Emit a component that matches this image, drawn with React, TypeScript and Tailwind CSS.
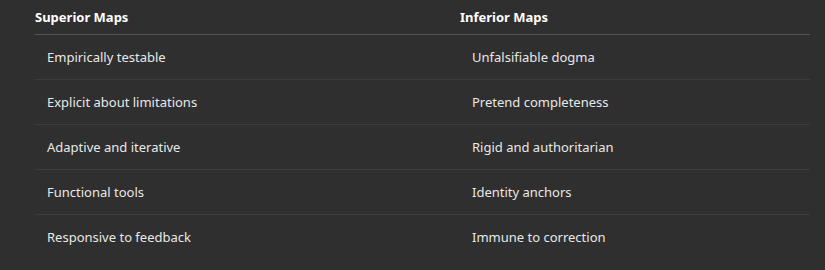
const rows = [
  ["Empirically testable", "Unfalsifiable dogma"],
  ["Explicit about limitations", "Pretend completeness"],
  ["Adaptive and iterative", "Rigid and authoritarian"],
  ["Functional tools", "Identity anchors"],
  ["Responsive to feedback", "Immune to correction"],
];

export default function App() {
  return (
    <div className="h-[270px] w-[825px] bg-[#2f2f2f] pl-[35px] pr-[15px] font-['Noto_Sans',sans-serif] text-[13px]">
      <table className="w-full border-collapse">
        <thead>
          <tr className="border-b border-[#545454]">
            <th className="h-[34px] w-[425px] px-0 pt-[2px] pb-0 text-left font-bold text-white">Superior Maps</th>
            <th className="h-[34px] px-0 pt-[2px] pb-0 text-left font-bold text-white">Inferior Maps</th>
          </tr>
        </thead>
        <tbody>
          {rows.map(([a, b], i) => (
            <tr key={a} className={i < rows.length - 1 ? "border-b border-[#3c3c3c]" : ""}>
              <td className="h-[45px] px-3 pt-[2px] text-[#e8e8e8]">{a}</td>
              <td className="h-[45px] px-3 pt-[2px] text-[#e8e8e8]">{b}</td>
            </tr>
          ))}
        </tbody>
      </table>
    </div>
  );
}
